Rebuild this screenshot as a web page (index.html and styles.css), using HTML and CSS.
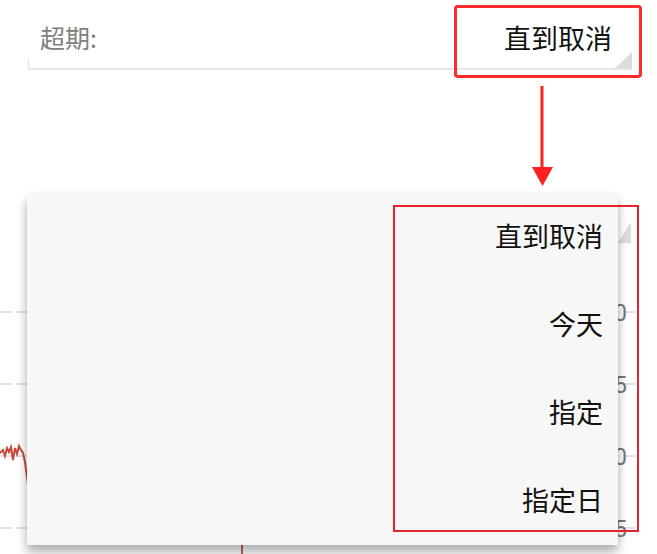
FILE: index.html
```html
<!DOCTYPE html>
<html lang="zh-CN">
<head>
    <meta charset="UTF-8">
    <meta name="viewport" content="width=device-width, initial-scale=1.0">
    <title>超期</title>
    <link rel="stylesheet" href="styles.css">
</head>
<body>
    <div class="page">
        <div class="field">
            <span class="field-label">超期:</span>
            <span class="field-value">直到取消</span>
        </div>

        <div class="chart">
            <svg width="657" height="264" viewBox="0 0 657 264">
                <g class="grid">
                    <line x1="0" y1="22" x2="640" y2="22"></line>
                    <line x1="0" y1="94" x2="640" y2="94"></line>
                    <line x1="0" y1="166" x2="640" y2="166"></line>
                    <line x1="0" y1="238" x2="640" y2="238"></line>
                </g>
                <polyline class="series" points="0,163 3,160 5,166 7,158 9,162 11,157 13,170 15,158 17,164 19,156 21,160 23,163 25,172 26,180 28,194"></polyline>
                <line class="marker" x1="242" y1="255" x2="242" y2="264"></line>
            </svg>
            <div class="axis">
                <span>0</span>
                <span>5</span>
                <span>0</span>
                <span>5</span>
            </div>
            <span class="spinner-corner"></span>
        </div>

        <!-- annotation: selected value -->
        <div class="callout"></div>
        <svg class="arrow" width="25" height="102" viewBox="0 0 25 102">
            <line x1="12" y1="0" x2="12" y2="84"></line>
            <polygon points="2,81 23,81 12.5,100"></polygon>
        </svg>

        <div class="popup">
            <ul class="menu">
                <li>直到取消</li>
                <li>今天</li>
                <li>指定</li>
                <li>指定日</li>
            </ul>
            <div class="popup-mark"></div>
        </div>
    </div>
</body>
</html>
```

FILE: styles.css
```css
* {
    box-sizing: border-box;
}
body {
    margin: 0;
    font-family: "Noto Sans CJK SC", "Noto Sans", sans-serif;
    background-color: #fff;
    color: #111;
}
.page {
    position: relative;
    width: 657px;
    height: 554px;
    overflow: hidden;
}
.field {
    position: relative;
    display: flex;
    align-items: center;
    justify-content: space-between;
    height: 70px;
    margin: 0 25px 0 28px;
    padding: 6px 20px 0 12px;
    border-bottom: 2px solid #e6e6e6;
}
.field::before {
    content: "";
    position: absolute;
    left: 0;
    bottom: 0;
    height: 9px;
    border-left: 1px solid #dedede;
}
.field::after {
    content: "";
    position: absolute;
    right: 0;
    bottom: 0;
    border-left: 17px solid transparent;
    border-bottom: 16px solid #dcdcdc;
}
.field-label {
    font-size: 25px;
    color: #808080;
}
.field-value {
    font-size: 27px;
    color: #111;
}
.chart {
    position: relative;
    margin-top: 220px;
    height: 264px;
}
.chart svg {
    display: block;
}
.grid line {
    stroke: #dcdcdc;
    stroke-width: 1.5;
    stroke-dasharray: 12 4;
}
.series {
    fill: none;
    stroke: #c8483c;
    stroke-width: 2;
}
.marker {
    stroke: #a33;
    stroke-width: 1.5;
}
.axis {
    position: absolute;
    top: 8px;
    left: 614px;
    display: flex;
    flex-direction: column;
    gap: 40px;
    font-family: "Roboto", sans-serif;
    font-size: 23px;
    line-height: 32px;
    color: #777;
}
.spinner-corner {
    position: absolute;
    left: 618px;
    top: -68px;
    border-left: 13px solid transparent;
    border-bottom: 21px solid #dcdcdc;
}
.callout {
    position: absolute;
    left: 454px;
    top: 5px;
    width: 188px;
    height: 73px;
    border: 3px solid #ff2b2b;
    border-radius: 4px;
}
.arrow {
    position: absolute;
    left: 530px;
    top: 86px;
}
.arrow line {
    stroke: #ff2020;
    stroke-width: 3;
}
.arrow polygon {
    fill: #ff2020;
}
.popup {
    position: absolute;
    left: 27px;
    top: 195px;
    width: 591px;
    height: 350px;
    background-color: #f7f7f7;
    box-shadow: 0 8px 10px rgba(0, 0, 0, 0.28), 0 0 8px rgba(0, 0, 0, 0.08);
}
.menu {
    list-style: none;
    margin: 0;
    padding: 0;
}
.menu li {
    height: 88px;
    line-height: 82px;
    padding-right: 15px;
    text-align: right;
    font-size: 27px;
    color: #111;
}
.popup-mark {
    position: absolute;
    left: 366px;
    top: 10px;
    width: 246px;
    height: 327px;
    border: 2px solid #e3242f;
}
```
